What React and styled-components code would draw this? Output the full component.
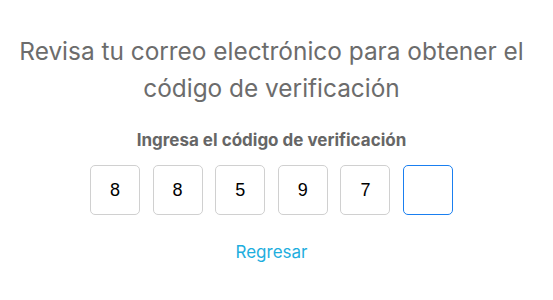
import React from "react";
import styled, { createGlobalStyle } from "styled-components";

const Global = createGlobalStyle`
  html, body { margin: 0; padding: 0; background: #fff; }
  body { font-family: Inter, "Noto Sans", sans-serif; }
`;

const Page = styled.div`
  width: 543px;
  padding-top: 33px;
  display: flex;
  flex-direction: column;
  align-items: center;
`;

const Title = styled.h1`
  margin: 0;
  font-size: 24.4px;
  line-height: 37px;
  font-weight: 400;
  color: #6c6c6c;
  text-align: center;
  width: 540px;
`;

const Label = styled.div`
  margin-top: 23px;
  font-size: 17px;
  font-weight: 700;
  color: #666;
  line-height: 21px;
`;

const Row = styled.div`
  margin-top: 14px;
  display: flex;
  gap: 12.6px;
`;

const Box = styled.input`
  box-sizing: border-box;
  width: 50px;
  height: 50px;
  border: 1px solid ${(p) => (p.$active ? "#1a7ff0" : "#d0d0d0")};
  border-radius: 5px;
  text-align: center;
  font-family: "Liberation Sans", Arial, sans-serif;
  font-size: 18px;
  color: #000;
  padding: 0;
  outline: none;
  background: #fff;
`;

const Back = styled.a`
  margin-top: 27px;
  font-size: 17px;
  color: #1eaede;
  text-decoration: none;
  line-height: 21px;
  cursor: pointer;
`;

export default function App() {
  const digits = ["8", "8", "5", "9", "7", ""];
  return (
    <>
      <Global />
      <Page>
        <Title>Revisa tu correo electrónico para obtener el código de verificación</Title>
        <Label>Ingresa el código de verificación</Label>
        <Row>
          {digits.map((d, i) => (
            <Box key={i} value={d} readOnly maxLength={1} $active={i === 5} />
          ))}
        </Row>
        <Back>Regresar</Back>
      </Page>
    </>
  );
}
